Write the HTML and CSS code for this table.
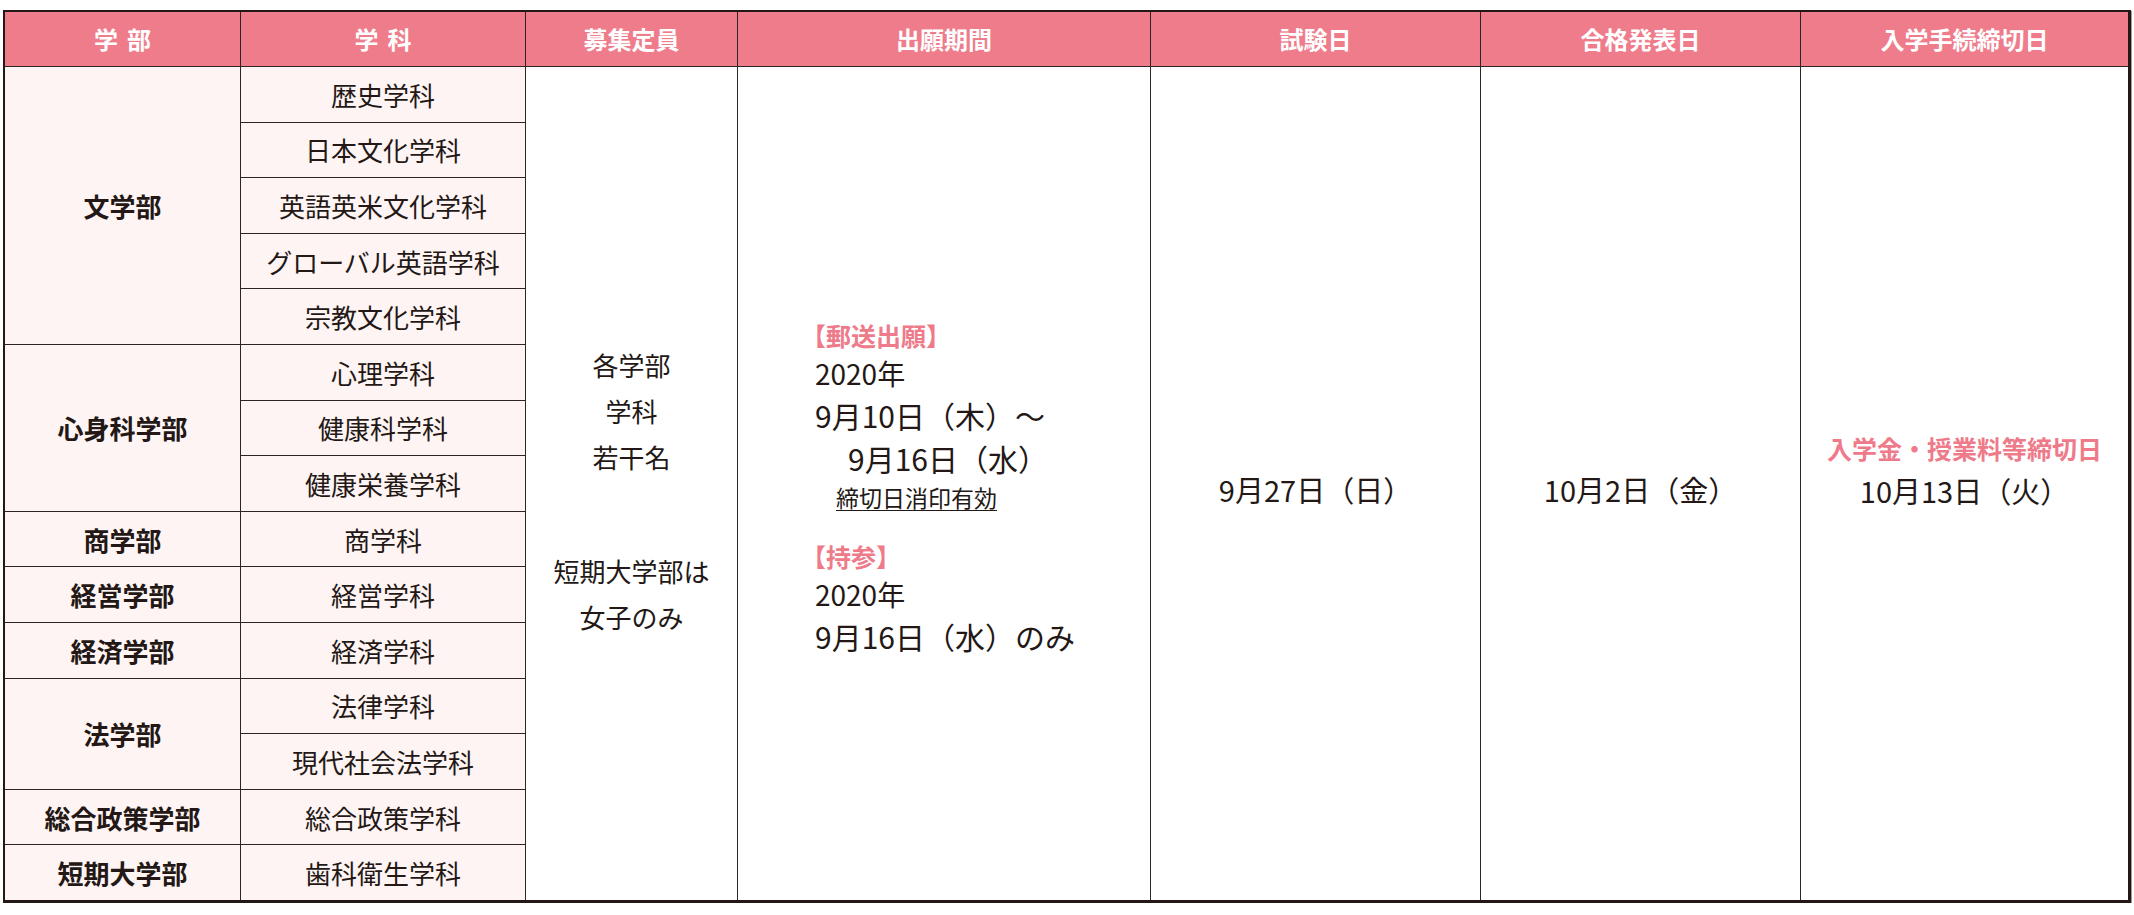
FILE: index.html
```html
<!DOCTYPE html>
<html lang="ja">
<head>
<meta charset="utf-8">
<title>入試日程</title>
<link rel="stylesheet" href="styles.css">
</head>
<body>
<div class="page">
  <div class="table">
    <div class="th spaced">学部</div>
    <div class="th spaced">学科</div>
    <div class="th">募集定員</div>
    <div class="th">出願期間</div>
    <div class="th">試験日</div>
    <div class="th">合格発表日</div>
    <div class="th">入学手続締切日</div>

    <div class="c fac span5">文学部</div>
    <div class="c dept">歴史学科</div>
    <div class="c quota">
      <div class="qblock">
        <p>各学部</p>
        <p>学科</p>
        <p>若干名</p>
      </div>
      <div class="qblock q2">
        <p>短期大学部は</p>
        <p>女子のみ</p>
      </div>
    </div>
    <div class="c apply">
      <div class="ln label">【郵送出願】</div>
      <div class="ln year">2020年</div>
      <div class="ln big">9月10日（木）〜</div>
      <div class="ln big ind1">9月16日（水）</div>
      <div class="ln note"><span class="ul">締切日消印有効</span></div>
      <div class="ln label gap">【持参】</div>
      <div class="ln year">2020年</div>
      <div class="ln big">9月16日（水）のみ</div>
    </div>
    <div class="c single"><div class="date">9月27日（日）</div></div>
    <div class="c single"><div class="date">10月2日（金）</div></div>
    <div class="c proc">
      <div class="plabel">入学金・授業料等締切日</div>
      <div class="date pdate">10月13日（火）</div>
    </div>

    <div class="c dept">日本文化学科</div>
    <div class="c dept">英語英米文化学科</div>
    <div class="c dept">グローバル英語学科</div>
    <div class="c dept">宗教文化学科</div>

    <div class="c fac span3">心身科学部</div>
    <div class="c dept">心理学科</div>
    <div class="c dept">健康科学科</div>
    <div class="c dept">健康栄養学科</div>

    <div class="c fac">商学部</div>
    <div class="c dept">商学科</div>

    <div class="c fac">経営学部</div>
    <div class="c dept">経営学科</div>

    <div class="c fac">経済学部</div>
    <div class="c dept">経済学科</div>

    <div class="c fac span2">法学部</div>
    <div class="c dept">法律学科</div>
    <div class="c dept">現代社会法学科</div>

    <div class="c fac">総合政策学部</div>
    <div class="c dept">総合政策学科</div>

    <div class="c fac">短期大学部</div>
    <div class="c dept">歯科衛生学科</div>
  </div>
</div>
</body>
</html>
```
FILE: styles.css
```css
html, body {
  margin: 0;
  padding: 0;
  background: #ffffff;
}

body {
  font-family: "Noto Sans CJK JP", "Noto Sans", sans-serif;
  color: #231815;
}

.page {
  padding: 10px 0 0 3px;
}

.table {
  display: grid;
  grid-template-columns: 235px 284px 211px 412px 329px 319px 327px;
  grid-template-rows: 54px repeat(15, 1fr);
  gap: 1px;
  width: 2123px;
  height: 888px;
  background: #2e2424;
  border: 2px solid #231815;
  border-right-width: 3px;
  border-bottom-width: 3px;
  box-shadow: 1px 1px 0 #a39a9a;
}

.th {
  background: #ef7c8b;
  color: #ffffff;
  font-size: 24px;
  font-weight: 700;
  display: flex;
  align-items: center;
  justify-content: center;
  padding-bottom: 2px;
}

.th.spaced {
  letter-spacing: 9px;
  padding-left: 9px;
}

.c {
  background: #ffffff;
  display: flex;
  align-items: center;
  justify-content: center;
  font-size: 26px;
}

.fac,
.dept {
  background: #fef4f3;
}

.fac {
  font-weight: 700;
}

.span5 { grid-row: span 5; }
.span3 { grid-row: span 3; }
.span2 { grid-row: span 2; }

.quota,
.apply,
.single,
.proc {
  grid-row: span 15;
}

/* 募集定員 */
.quota {
  flex-direction: column;
  padding-top: 16px;
}

.qblock p {
  margin: 0;
  line-height: 46px;
  text-align: center;
}

.q2 {
  margin-top: 68px;
}

/* 出願期間 */
.apply {
  flex-direction: column;
  align-items: flex-start;
  justify-content: center;
  padding: 8px 0 0 77px;
}

.ln {
  white-space: nowrap;
}

.label {
  color: #ee7a8a;
  font-size: 25px;
  font-weight: 700;
  line-height: 38px;
  margin-left: -14px;
}

.label.gap {
  margin-top: 21px;
}

.year {
  font-size: 28px;
  line-height: 38px;
}

.big {
  font-size: 30px;
  line-height: 46px;
}

.ind1 {
  line-height: 40px;
  padding-left: 33px;
}

.note {
  font-size: 23px;
  line-height: 38px;
  padding-left: 21px;
}

.ul {
  text-decoration: underline;
  text-decoration-thickness: 1px;
  text-underline-offset: 3px;
}

/* 試験日・合格発表日 */
.single {
  padding-top: 12px;
}

.date {
  font-size: 29px;
  line-height: 42px;
  white-space: nowrap;
}

/* 入学手続締切日 */
.proc {
  flex-direction: column;
  padding-bottom: 29px;
}

.plabel {
  color: #ee7a8a;
  font-size: 25px;
  font-weight: 700;
  line-height: 42px;
  white-space: nowrap;
}
```
